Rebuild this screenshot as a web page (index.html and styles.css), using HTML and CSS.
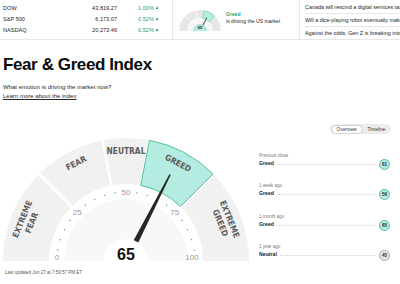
FILE: index.html
```html
<!DOCTYPE html>
<html lang="en">
<head>
    <meta charset="UTF-8">
    <title>Fear &amp; Greed Index</title>
    <link rel="stylesheet" href="styles.css">
</head>

<body>
    <!-- top strip: markets, mood, headlines -->
    <header class="ticker">
        <div class="markets">
            <div class="mkt"><span class="mkt-name">DOW</span><span class="mkt-val">43,819.27</span><span class="mkt-chg">1.00%<i class="up"></i></span></div>
            <div class="mkt"><span class="mkt-name">S&amp;P 500</span><span class="mkt-val">6,173.07</span><span class="mkt-chg">0.52%<i class="up"></i></span></div>
            <div class="mkt"><span class="mkt-name">NASDAQ</span><span class="mkt-val">20,273.46</span><span class="mkt-chg">0.52%<i class="up"></i></span></div>
        </div>

        <div class="mood">
            <svg class="mini-gauge" width="42" height="21" viewBox="-21 -21 42 21">
                <circle r="17" fill="none" stroke="#e6e6e6" stroke-width="8" stroke-dasharray="53.41 200" transform="rotate(180)"/>
                <g stroke="#fff" stroke-width="0.8">
                    <line x1="0" y1="-12.5" x2="0" y2="-21.5" transform="rotate(-45)"/>
                    <line x1="0" y1="-12.5" x2="0" y2="-21.5" transform="rotate(-11)"/>
                    <line x1="0" y1="-12.5" x2="0" y2="-21.5" transform="rotate(11)"/>
                    <line x1="0" y1="-12.5" x2="0" y2="-21.5" transform="rotate(45)"/>
                </g>
                <path d="M4.01 -20.61 A21 21 0 0 1 14.85 -14.85 L9.19 -9.19 A13 13 0 0 0 2.48 -12.76 Z" fill="#b5ece2" stroke="#52bf9f" stroke-width="0.5"/>
                <circle r="12.5" fill="#f6f6f6"/>
                <line x1="0" y1="-6" x2="0" y2="-15" stroke="#333" stroke-width="0.8" transform="rotate(27)"/>
                <circle r="6.3" fill="#b5ece2" stroke="#52bf9f" stroke-width="0.5"/>
                <text class="mini-val" x="0" y="-2.2">65</text>
            </svg>
            <div class="mood-text">
                <strong>Greed</strong><br>
                is driving the US market
            </div>
        </div>

        <ul class="news">
            <li>Canada will rescind a digital services tax that Trump called a direct attack</li>
            <li>Will a dice-playing robot eventually make you a better surgeon?</li>
            <li>Against the odds, Gen Z is breaking into the housing market</li>
        </ul>
    </header>

    <main class="page">
        <h1>Fear &amp; Greed Index</h1>
        <p class="intro">
            What emotion is driving the market now?<br>
            <a href="#">Learn more about the index</a>
        </p>

        <div class="board">
            <div class="gauge-col">
                <svg class="gauge" width="246" height="124" viewBox="-123 -124 246 124">
                    <!-- band -->
                    <circle r="100" fill="none" stroke="#f1f1f1" stroke-width="46" stroke-dasharray="314.16 1000" transform="rotate(180)"/>
                    <g stroke="#fff" stroke-width="2.5">
                        <line x1="0" y1="-76" x2="0" y2="-124" transform="rotate(-45)"/>
                        <line x1="0" y1="-76" x2="0" y2="-124" transform="rotate(-11)"/>
                        <line x1="0" y1="-76" x2="0" y2="-124" transform="rotate(11)"/>
                        <line x1="0" y1="-76" x2="0" y2="-124" transform="rotate(45)"/>
                    </g>
                    <path d="M23.47 -120.74 A123 123 0 0 1 86.97 -86.97 L54.45 -54.45 A77 77 0 0 0 14.69 -75.59 Z" fill="#b5ece2" stroke="#52bf9f" stroke-width="1"/>

                    <!-- segment names -->
                    <g class="seg">
                        <g transform="rotate(-68)"><text y="-112">EXTREME</text><text y="-102">FEAR</text></g>
                        <g transform="rotate(-27)"><text y="-110">FEAR</text></g>
                        <text y="-110">NEUTRAL</text>
                        <g transform="rotate(28)"><text y="-111">GREED</text></g>
                        <g transform="rotate(68)"><text y="-112">EXTREME</text><text y="-102">GREED</text></g>
                    </g>

                    <!-- inner dial -->
                    <circle r="62" fill="#f8f8f8"/>
                    <g class="dots">
                        <circle cy="-69" r="0.7" transform="rotate(-81)"/>
                        <circle cy="-69" r="0.7" transform="rotate(-72)"/>
                        <circle cy="-69" r="0.7" transform="rotate(-63)"/>
                        <circle cy="-69" r="0.7" transform="rotate(-54)"/>
                        <circle cy="-69" r="0.7" transform="rotate(-36)"/>
                        <circle cy="-69" r="0.7" transform="rotate(-27)"/>
                        <circle cy="-69" r="0.7" transform="rotate(-18)"/>
                        <circle cy="-69" r="0.7" transform="rotate(-9)"/>
                        <circle cy="-69" r="0.7" transform="rotate(9)"/>
                        <circle cy="-69" r="0.7" transform="rotate(18)"/>
                        <circle cy="-69" r="0.7" transform="rotate(27)"/>
                        <circle cy="-69" r="0.7" transform="rotate(36)"/>
                        <circle cy="-69" r="0.7" transform="rotate(54)"/>
                        <circle cy="-69" r="0.7" transform="rotate(63)"/>
                        <circle cy="-69" r="0.7" transform="rotate(72)"/>
                        <circle cy="-69" r="0.7" transform="rotate(81)"/>
                    </g>
                    <g class="ticks">
                        <text x="-69" y="-4">0</text>
                        <text x="-48.8" y="-48.8">25</text>
                        <text x="0" y="-69">50</text>
                        <text x="48.8" y="-48.8">75</text>
                        <text x="66" y="-4">100</text>
                    </g>

                    <polygon points="-2.6,-22 2.6,-22 0.7,-97 -0.7,-97" fill="#262626" transform="rotate(27)"/>
                    <circle r="22" fill="#fff"/>
                    <text class="val" x="0" y="-6.5">65</text>
                </svg>
                <p class="updated">Last updated Jun 27 at 7:59:57 PM ET</p>
            </div>

            <div class="side-col">
                <div class="toggle"><span class="tab on">Overview</span><span class="tab">Timeline</span></div>

                <div class="hist">
                    <div class="hist-label">Previous close</div>
                    <div class="hist-line"><span class="hist-name">Greed</span><span class="dots-line"></span><span class="badge">61</span></div>
                </div>
                <div class="hist">
                    <div class="hist-label">1 week ago</div>
                    <div class="hist-line"><span class="hist-name">Greed</span><span class="dots-line"></span><span class="badge">56</span></div>
                </div>
                <div class="hist">
                    <div class="hist-label">1 month ago</div>
                    <div class="hist-line"><span class="hist-name">Greed</span><span class="dots-line"></span><span class="badge">65</span></div>
                </div>
                <div class="hist">
                    <div class="hist-label">1 year ago</div>
                    <div class="hist-line"><span class="hist-name">Neutral</span><span class="dots-line"></span><span class="badge neutral">45</span></div>
                </div>
            </div>
        </div>
    </main>
</body>
</html>
```

FILE: styles.css
```css
body{
    margin: 0;
    font-family: "Liberation Sans", Arial, sans-serif;
    color: #262626;
    background: #fff;
    overflow: hidden;
}

/* top strip */
.ticker{
    display: flex;
    height: 39px;
    border-bottom: 1px solid #e6e6e6;
}
.markets{
    width: 169px;
    padding: 2px 0 0 3px;
}
.mkt{
    display: flex;
    align-items: center;
    height: 11px;
    font-size: 5.6px;
}
.mkt-name{
    width: 70px;
}
.mkt-val{
    width: 44px;
    text-align: right;
}
.mkt-chg{
    margin-left: 21px;
    color: #1f9f6f;
    display: flex;
    align-items: center;
}
.up{
    width: 0;
    height: 0;
    margin-left: 2px;
    border-left: 1.7px solid transparent;
    border-right: 1.7px solid transparent;
    border-bottom: 3px solid #117a54;
}
.mood{
    width: 120px;
    border-left: 1px solid #e6e6e6;
    padding-left: 6px;
    display: flex;
    align-items: flex-start;
}
.mini-gauge{
    margin-top: 10px;
}
.mini-val{
    font-size: 4.2px;
    font-weight: bold;
    text-anchor: middle;
    fill: #222;
}
.mood-text{
    margin: 11px 0 0 5px;
    font-size: 5.1px;
    line-height: 6.5px;
}
.mood-text strong{
    color: #1f9f6f;
}
.news{
    flex: 1;
    min-width: 0;
    margin: 0;
    padding: 1px 0 0 5px;
    list-style: none;
    border-left: 1px solid #e6e6e6;
    overflow: hidden;
}
.news li{
    font-size: 5.4px;
    line-height: 12px;
    white-space: nowrap;
    overflow: hidden;
    border-bottom: 1px solid #e6e6e6;
}
.news li:last-child{
    border-bottom: none;
}

/* page body */
.page{
    padding: 0 0 0 3px;
}
h1{
    margin: 15px 0 0;
    font-size: 17px;
    line-height: 20px;
    letter-spacing: -0.4px;
    color: #0c0c0c;
}
.intro{
    margin: 8px 0 0;
    font-size: 6px;
    line-height: 9px;
}
.intro a{
    color: #262626;
}
.board{
    display: flex;
    margin-top: 23px;
}
.gauge-col{
    width: 252px;
}
.gauge{
    display: block;
    margin-top: 13px;
}
.seg text{
    font-family: "DejaVu Sans Condensed", "DejaVu Sans", sans-serif;
    font-stretch: condensed;
    font-weight: bold;
    font-size: 8.3px;
    fill: #5c5c5c;
    text-anchor: middle;
    dominant-baseline: central;
}
.dots circle{
    fill: #8c8c8c;
}
.ticks text{
    font-size: 8px;
    fill: #9a9a9a;
    text-anchor: middle;
    dominant-baseline: central;
}
.val{
    font-size: 16px;
    font-weight: bold;
    fill: #111;
    text-anchor: middle;
    dominant-baseline: central;
}
.updated{
    margin: 9px 0 0 2px;
    font-size: 4.5px;
    line-height: 6px;
    color: #555;
}

/* history column */
.side-col{
    flex: 1;
    display: flex;
    flex-direction: column;
    padding: 0 10px 0 4px;
}
.toggle{
    align-self: flex-end;
    display: flex;
    margin-right: -1px;
    background: #ececec;
    border-radius: 5px;
    height: 10px;
    box-sizing: border-box;
    padding: 0.5px;
}
.tab{
    font-size: 4.8px;
    line-height: 9px;
    padding: 0 5px;
    color: #333;
}
.tab.on{
    background: #fff;
    border: 0.5px solid #cfcfcf;
    border-radius: 5px;
    line-height: 8px;
}
.hist{
    margin-top: 12.5px;
}
.toggle + .hist{
    margin-top: 17.5px;
}
.hist-label{
    font-size: 4.5px;
    line-height: 7px;
    color: #777;
}
.hist-line{
    display: flex;
    align-items: center;
    height: 11px;
}
.hist-name{
    align-self: flex-start;
    font-size: 5.2px;
    line-height: 8px;
    font-weight: bold;
    color: #222;
}
.dots-line{
    flex: 1;
    margin: 0 3px;
    border-top: 1px dotted #d6d6d6;
}
.badge{
    width: 11px;
    height: 11px;
    box-sizing: border-box;
    border-radius: 50%;
    background: #b5ece2;
    border: 0.8px solid #52bf9f;
    font-size: 4.6px;
    font-weight: bold;
    line-height: 9.5px;
    text-align: center;
}
.badge.neutral{
    background: #e6e6e6;
    border-color: #a8a8a8;
}
```
